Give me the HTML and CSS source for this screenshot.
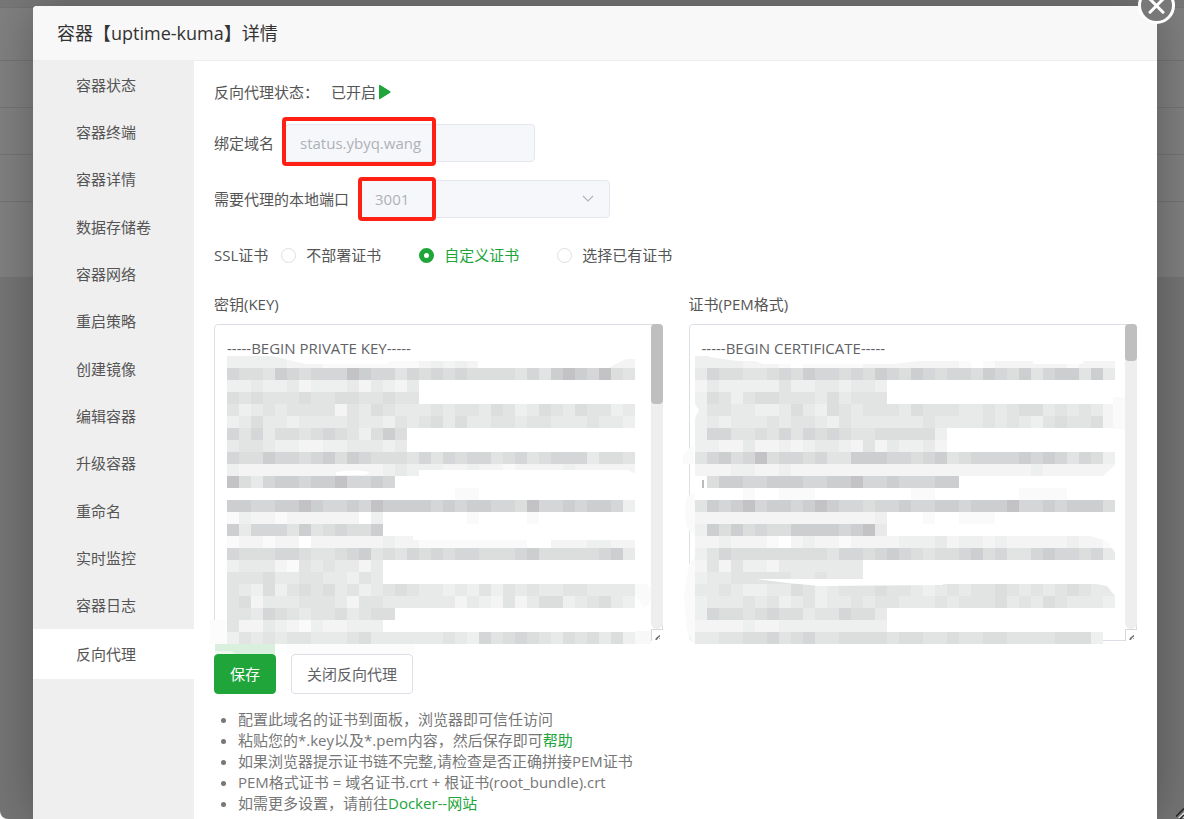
FILE: index.html
```html
<!DOCTYPE html>
<html lang="zh-CN">
<head>
<meta charset="utf-8">
<meta name="viewport" content="width=device-width, initial-scale=1">
<title>容器【uptime-kuma】详情</title>
<link rel="stylesheet" href="styles.css">
</head>
<body>
<div class="backdrop" aria-hidden="true">
  <div class="backdrop-row backdrop-top"></div>
  <div class="backdrop-row backdrop-head"></div>
  <div class="backdrop-row"></div>
  <div class="backdrop-row"></div>
  <div class="backdrop-row"></div>
  <div class="backdrop-row backdrop-last"></div>
</div>

<section class="dialog" role="dialog" aria-labelledby="dialog-title">
  <header class="dialog-header">
    <h1 class="dialog-title" id="dialog-title">容器【uptime-kuma】详情</h1>
    <button class="close" type="button" aria-label="关闭">
      <svg class="close-icon" viewBox="0 0 37 37"><circle cx="18.5" cy="18.5" r="17" fill="#787878" stroke="#fff" stroke-width="3"/><path d="M12 12.2 25 25.2M25 12.2 12 25.2" stroke="#fff" stroke-width="3" stroke-linecap="round"/></svg>
    </button>
  </header>

  <div class="dialog-body">
    <nav class="side">
      <ul class="side-list">
        <li><a class="side-link" href="#status">容器状态</a></li>
        <li><a class="side-link" href="#terminal">容器终端</a></li>
        <li><a class="side-link" href="#detail">容器详情</a></li>
        <li><a class="side-link" href="#volumes">数据存储卷</a></li>
        <li><a class="side-link" href="#network">容器网络</a></li>
        <li><a class="side-link" href="#restart">重启策略</a></li>
        <li><a class="side-link" href="#image">创建镜像</a></li>
        <li><a class="side-link" href="#edit">编辑容器</a></li>
        <li><a class="side-link" href="#upgrade">升级容器</a></li>
        <li><a class="side-link" href="#rename">重命名</a></li>
        <li><a class="side-link" href="#monitor">实时监控</a></li>
        <li><a class="side-link" href="#logs">容器日志</a></li>
        <li><a class="side-link active" href="#proxy" aria-current="page">反向代理</a></li>
      </ul>
    </nav>

    <form class="content">
      <div class="row status-row">
        <span>反向代理状态：</span>
        <span class="state">已开启<svg class="play" viewBox="0 0 12 16"><path d="M0 1.5Q0 .2 1.2 1L11.2 7.3Q12 8 11.2 8.7L1.2 15Q0 15.8 0 14.5Z" fill="#20a53a"/></svg></span>
      </div>

      <div class="row">
        <label for="domain">绑定域名</label>
        <div class="field">
          <input class="control" id="domain" type="text" value="status.ybyq.wang" disabled>
          <span class="mark mark-domain"></span>
        </div>
      </div>

      <div class="row port-row">
        <label for="port">需要代理的本地端口</label>
        <div class="field">
          <select class="control" id="port" disabled><option>3001</option></select>
          <svg class="chevron" viewBox="0 0 12 7"><path d="M1 1 6 6 11 1" fill="none" stroke="#b0b4bc" stroke-width="1.2"/></svg>
          <span class="mark mark-port"></span>
        </div>
      </div>

      <div class="row ssl-row" role="radiogroup" aria-labelledby="ssl-label">
        <span id="ssl-label">SSL证书</span>
        <div class="radios">
          <label class="radio"><input type="radio" name="ssl">不部署证书</label>
          <label class="radio"><input type="radio" name="ssl" checked>自定义证书</label>
          <label class="radio"><input type="radio" name="ssl">选择已有证书</label>
        </div>
      </div>

      <div class="certs">
        <div class="cert">
          <label for="key">密钥(KEY)</label>
          <div class="area">
            <textarea id="key" spellcheck="false">-----BEGIN PRIVATE KEY-----</textarea>
            <svg class="mosaic" id="key-mosaic" width="460" height="298" aria-hidden="true"></svg>
            <span class="track"><span class="thumb thumb-key"></span></span>
            <svg class="grip" viewBox="0 0 12 12"><path d="M.5 12V.5H12" fill="none" stroke="#d5d7dc"/><path d="M4 10.5 5.5 8.5 8 6.5 9 6V7.5L7 9 6 11Z" fill="#666"/><path d="M8 10 9 9" stroke="#999"/></svg>
          </div>
        </div>
        <div class="cert">
          <label for="pem">证书(PEM格式)</label>
          <div class="area">
            <textarea id="pem" spellcheck="false">-----BEGIN CERTIFICATE-----</textarea>
            <svg class="mosaic" id="pem-mosaic" width="460" height="298" aria-hidden="true"></svg>
            <span class="track"><span class="thumb thumb-pem"></span></span>
            <svg class="grip" viewBox="0 0 12 12"><path d="M.5 12V.5H12" fill="none" stroke="#d5d7dc"/><path d="M4 10.5 5.5 8.5 8 6.5 9 6V7.5L7 9 6 11Z" fill="#666"/><path d="M8 10 9 9" stroke="#999"/></svg>
          </div>
        </div>
      </div>

      <div class="actions">
        <button class="btn btn-primary" type="button">保存</button>
        <button class="btn" type="button">关闭反向代理</button>
      </div>

      <ul class="tips">
        <li>配置此域名的证书到面板，浏览器即可信任访问</li>
        <li>粘贴您的*.key以及*.pem内容，然后保存即可<a href="#help">帮助</a></li>
        <li>如果浏览器提示证书链不完整,请检查是否正确拼接PEM证书</li>
        <li>PEM格式证书 = 域名证书.crt + 根证书(root_bundle).crt</li>
        <li>如需更多设置，请前往<a href="#site">Docker--网站</a></li>
      </ul>
    </form>
  </div>
</section>
<svg class="page-grip" viewBox="0 0 8 12" aria-hidden="true"><path d="M2 11 8 5V11Z" fill="#ddd"/><path d="M0 9.5 8 1.5M4 12 8 8" stroke="#222" stroke-width="1.5"/></svg>
<script src="mosaic.js"></script>
</body>
</html>
```

FILE: styles.css
```css
* { box-sizing: border-box; }

html { background: #fff; }

body {
  margin: 0;
  height: 100vh;
  overflow: hidden;
  position: relative;
  display: flex;
  background: #757575;
  border-bottom-left-radius: 8px;
  color: #555;
  font: 15px/20px "Open Sans", "Noto Sans CJK SC", sans-serif;
}

h1, ul { margin: 0; padding: 0; }

input, select, textarea, button { font: inherit; }

a { color: #20a53a; text-decoration: none; }

.backdrop { position: absolute; inset: 0 0 auto; }
.backdrop-row { height: 47px; background: #808080; border-bottom: 1px solid #747474; }
.backdrop-top { height: 8px; background: #787878; }
.backdrop-head { height: 53px; }
.backdrop-last { height: 75px; border-bottom: 0; }

.dialog {
  position: relative;
  flex: 1;
  display: flex;
  flex-direction: column;
  margin: 6px 27px 0 33px;
  background: #fff;
  border-radius: 4px 4px 0 0;
  box-shadow: 1px 1px 50px rgba(0, 0, 0, .3);
}

.dialog-header {
  padding: 14px 24px;
  background: #f8f8f8;
  border-bottom: 1px solid #eee;
  border-radius: 4px 4px 0 0;
}
.dialog-title { font-size: 18px; line-height: 26px; font-weight: 400; color: #333; }

.close {
  position: absolute;
  top: -19px;
  right: -18px;
  padding: 0;
  border: 0;
  background: none;
}
.close-icon { display: block; width: 37px; height: 37px; }

.dialog-body { flex: 1; display: flex; min-height: 0; }

.side { width: 161px; flex: none; background: #efefef; }
.side-list { list-style: none; display: grid; grid-template-rows: repeat(12, 1fr) 50px; height: 618px; }
.side-list li { display: grid; }
.side-link { display: flex; align-items: center; padding-left: 43px; color: #555; }
.side-link.active { background: #fff; }

.content { flex: 1; min-width: 0; padding: 21px 20px 0; }

.row { display: flex; align-items: center; gap: 11px; }
.status-row { gap: 12px; margin-bottom: 22px; }
.state { display: flex; align-items: center; gap: 3px; }
.play { width: 12px; height: 16px; }

.field { position: relative; width: 250px; }
.control {
  display: block;
  width: 100%;
  height: 38px;
  padding: 0 14px;
  border: 1px solid #e4e7ed;
  border-radius: 4px;
  background: #f5f7fb;
  color: #aeb1b7;
  opacity: 1;
  appearance: none;
}
.port-row { margin-top: 18px; }
.chevron { position: absolute; right: 16px; top: 15px; width: 12px; height: 7px; }
.mark { position: absolute; border: 4px solid #ff2015; border-radius: 4px; }
.mark-domain { left: -3px; top: -7px; width: 154px; height: 49px; }
.mark-port { left: -2px; top: -3px; width: 78px; height: 44px; }

.ssl-row { gap: 13px; margin-top: 27px; }
.radios { display: flex; gap: 38px; }
.radio { display: flex; align-items: center; gap: 10px; }
.radio:has(:checked) { color: #20a53a; }
.radio input {
  appearance: none;
  width: 15px;
  height: 15px;
  margin: 0;
  border: 1px solid #dcdfe6;
  border-radius: 50%;
  background: #fff;
}
.radio input:checked { border: 5px solid #20a53a; }

.certs { display: grid; grid-template-columns: 1fr 1fr; gap: 26px; margin-top: 29px; }
.cert { display: grid; gap: 10px; }
.area { position: relative; }
.area textarea {
  display: block;
  width: 100%;
  height: 317px;
  padding: 11px 12px;
  border: 1px solid #dcdfe6;
  border-radius: 4px;
  line-height: 24px;
  color: #606266;
  resize: none;
  overflow: hidden;
}
.mosaic { position: absolute; left: -6px; top: 32px; pointer-events: none; }
.track { position: absolute; right: 0; top: 0; width: 12px; height: 305px; border-radius: 6px; background: #eee; }
.thumb { display: block; border-radius: 4px; background: #bfbfbf; }
.thumb-key { height: 80px; }
.thumb-pem { height: 37px; }
.grip { position: absolute; right: 0; bottom: 0; width: 12px; height: 12px; background: #fff; }

.actions { display: flex; gap: 15px; margin-top: 13px; }
.btn {
  height: 40px;
  padding: 0 15px;
  border: 1px solid #dcdfe6;
  border-radius: 4px;
  background: #fff;
  color: #606266;
}
.btn-primary { border-color: #20a53a; background: #20a53a; color: #fff; }

.tips { margin-top: 15px; padding-left: 24px; line-height: 21px; color: #777; }

.page-grip { position: absolute; right: 0; bottom: 0; width: 8px; height: 12px; }
```

FILE: mosaic.js
```js
// Redaction mosaics: one digit per 12px cell, 0 = clear, 9 = darkest.
const SHADES = ['', '#fafafa', '#f4f4f4', '#eeefef', '#e8e9e9', '#e2e3e3', '#dcdddd', '#d5d6d7', '#cdced0', '#c3c3c5'];

const KEY_ROWS = [
  '3333322211111111232322333000222122',
  '7665876777987757676766665758987965',
  '3343342333424324',
  '6565556556655655',
  '5345455552546544454554653465465534',
  '3464434444544354564644554554445443',
  '757466567653686',
  '455433223344434',
  '7668776786876665757677567567774665',
  '3222222222222343332232212222322222',
  '96478878897787',
  '0000000000000000000110000000000000',
  '8877889877879888878788776977878873',
  '1322122222203000000010000100000000',
  '8477758567668',
  '1221220222222322111111111002223322',
  '7666776556785657676776667866666784',
  '3444215454424',
  '5556445544354',
  '5436356564534565443435354544554444',
  '5624445554255444444243252466345643',
  '55476545564566',
  '5224321322333',
  '3545455444564444445437567654656463'
];
const PEM_ROWS = [
  '33332221011111222222221012222221222',
  '47665567687767687687677687685788584',
  '2433333533443443',
  '3653566555464555',
  '35544334643654555465554454566454542',
  '34344454554354444445444454543565562',
  '377556575767655666663',
  '332242232344325243342',
  '57867967767558887767856777787875763',
  '22233223222222222222222222223222222',
  '0688778887788977877788',
  '00001001110000000011000000011110000',
  '58789788789877677877887888977878886',
  '2222222222222223000100111000000000',
  '3868676688887894',
  '22322210232212222333423323222223221',
  '35766666666577678765667867557877674',
  '25253324444444',
  '34455555445444',
  '44543344653455565543454556545456544',
  '34445453453445455444545556454654443',
  '3766567664557664',
  '2222322333333333',
  '4455667567556666566556556655556663'
];

// Lone faint blotches around the mosaic, in svg coordinates.
const KEY_BLOTS = [
  ['M2 264H19V288H2Z', '#fcfcfc'],
  ['M427 228H438L445 234V242L437 252L427 240Z', '#fafafa'],
  ['M427 275H443V288H427Z', '#f8f8f8'],
  ['M7 288H67V298H7Z', '#daf0de'],
  ['M7 295H23L28 298H7Z', '#edf8ef'],
  ['M79 288H207V298H79Z', '#fcfcfc']
];
const PEM_BLOTS = [
  ['M0 99 11 88V108H0Z', '#fafafa'],
  ['M4 141 12 136V180L4 172Q0 155 4 141Z', '#fafafa'],
  ['M6 208 12 200V288Q2 280 3 260L1 240Z', '#fafafa'],
  ['M430 41H442V73H430Z', '#fafafa'],
  ['M19 124H21V132H19Z', '#bbb']
];
const KEY_CLEAR = [
  'M18 0V-1H60L98 8H180V5H270V12H400L418 3H428V0Z',
  'M128 116Q145 113 162 116L158 119H128Z',
  'M211 114H420L428 118V121H211Z',
  'M205 179H330L427 180V179V184H205Z'
];
const PEM_CLEAR = [
  'M12 0H26V1L55 5H72L80 8H210L236 5H350V8H400V5H432V0Z',
  'M73 223H181V228H260V229L137 230 105 227Z',
  'M413 228 424 230 432 240V227H413Z',
  'M408 180 426 186 429 192 433 198V179H408Z',
  'M433 108 420 120H433Z',
  'M12 48 16 54 12 62Z'
];

function draw(id, rows, left, blots, clears) {
  const parts = [];
  rows.forEach((row, y) => [...row].forEach((level, x) => {
    if (level !== '0') {
      parts.push(`<rect x="${left + x * 12}" y="${y * 12}" width="12" height="12" fill="${SHADES[level]}"/>`);
    }
  }));
  blots.forEach(([d, fill]) => parts.push(`<path d="${d}" fill="${fill}"/>`));
  clears.forEach(d => parts.push(`<path d="${d}" fill="#fff"/>`));
  document.getElementById(id).innerHTML = parts.join('');
}

draw('key-mosaic', KEY_ROWS, 19, KEY_BLOTS, KEY_CLEAR);
draw('pem-mosaic', PEM_ROWS, 12, PEM_BLOTS, PEM_CLEAR);
```
